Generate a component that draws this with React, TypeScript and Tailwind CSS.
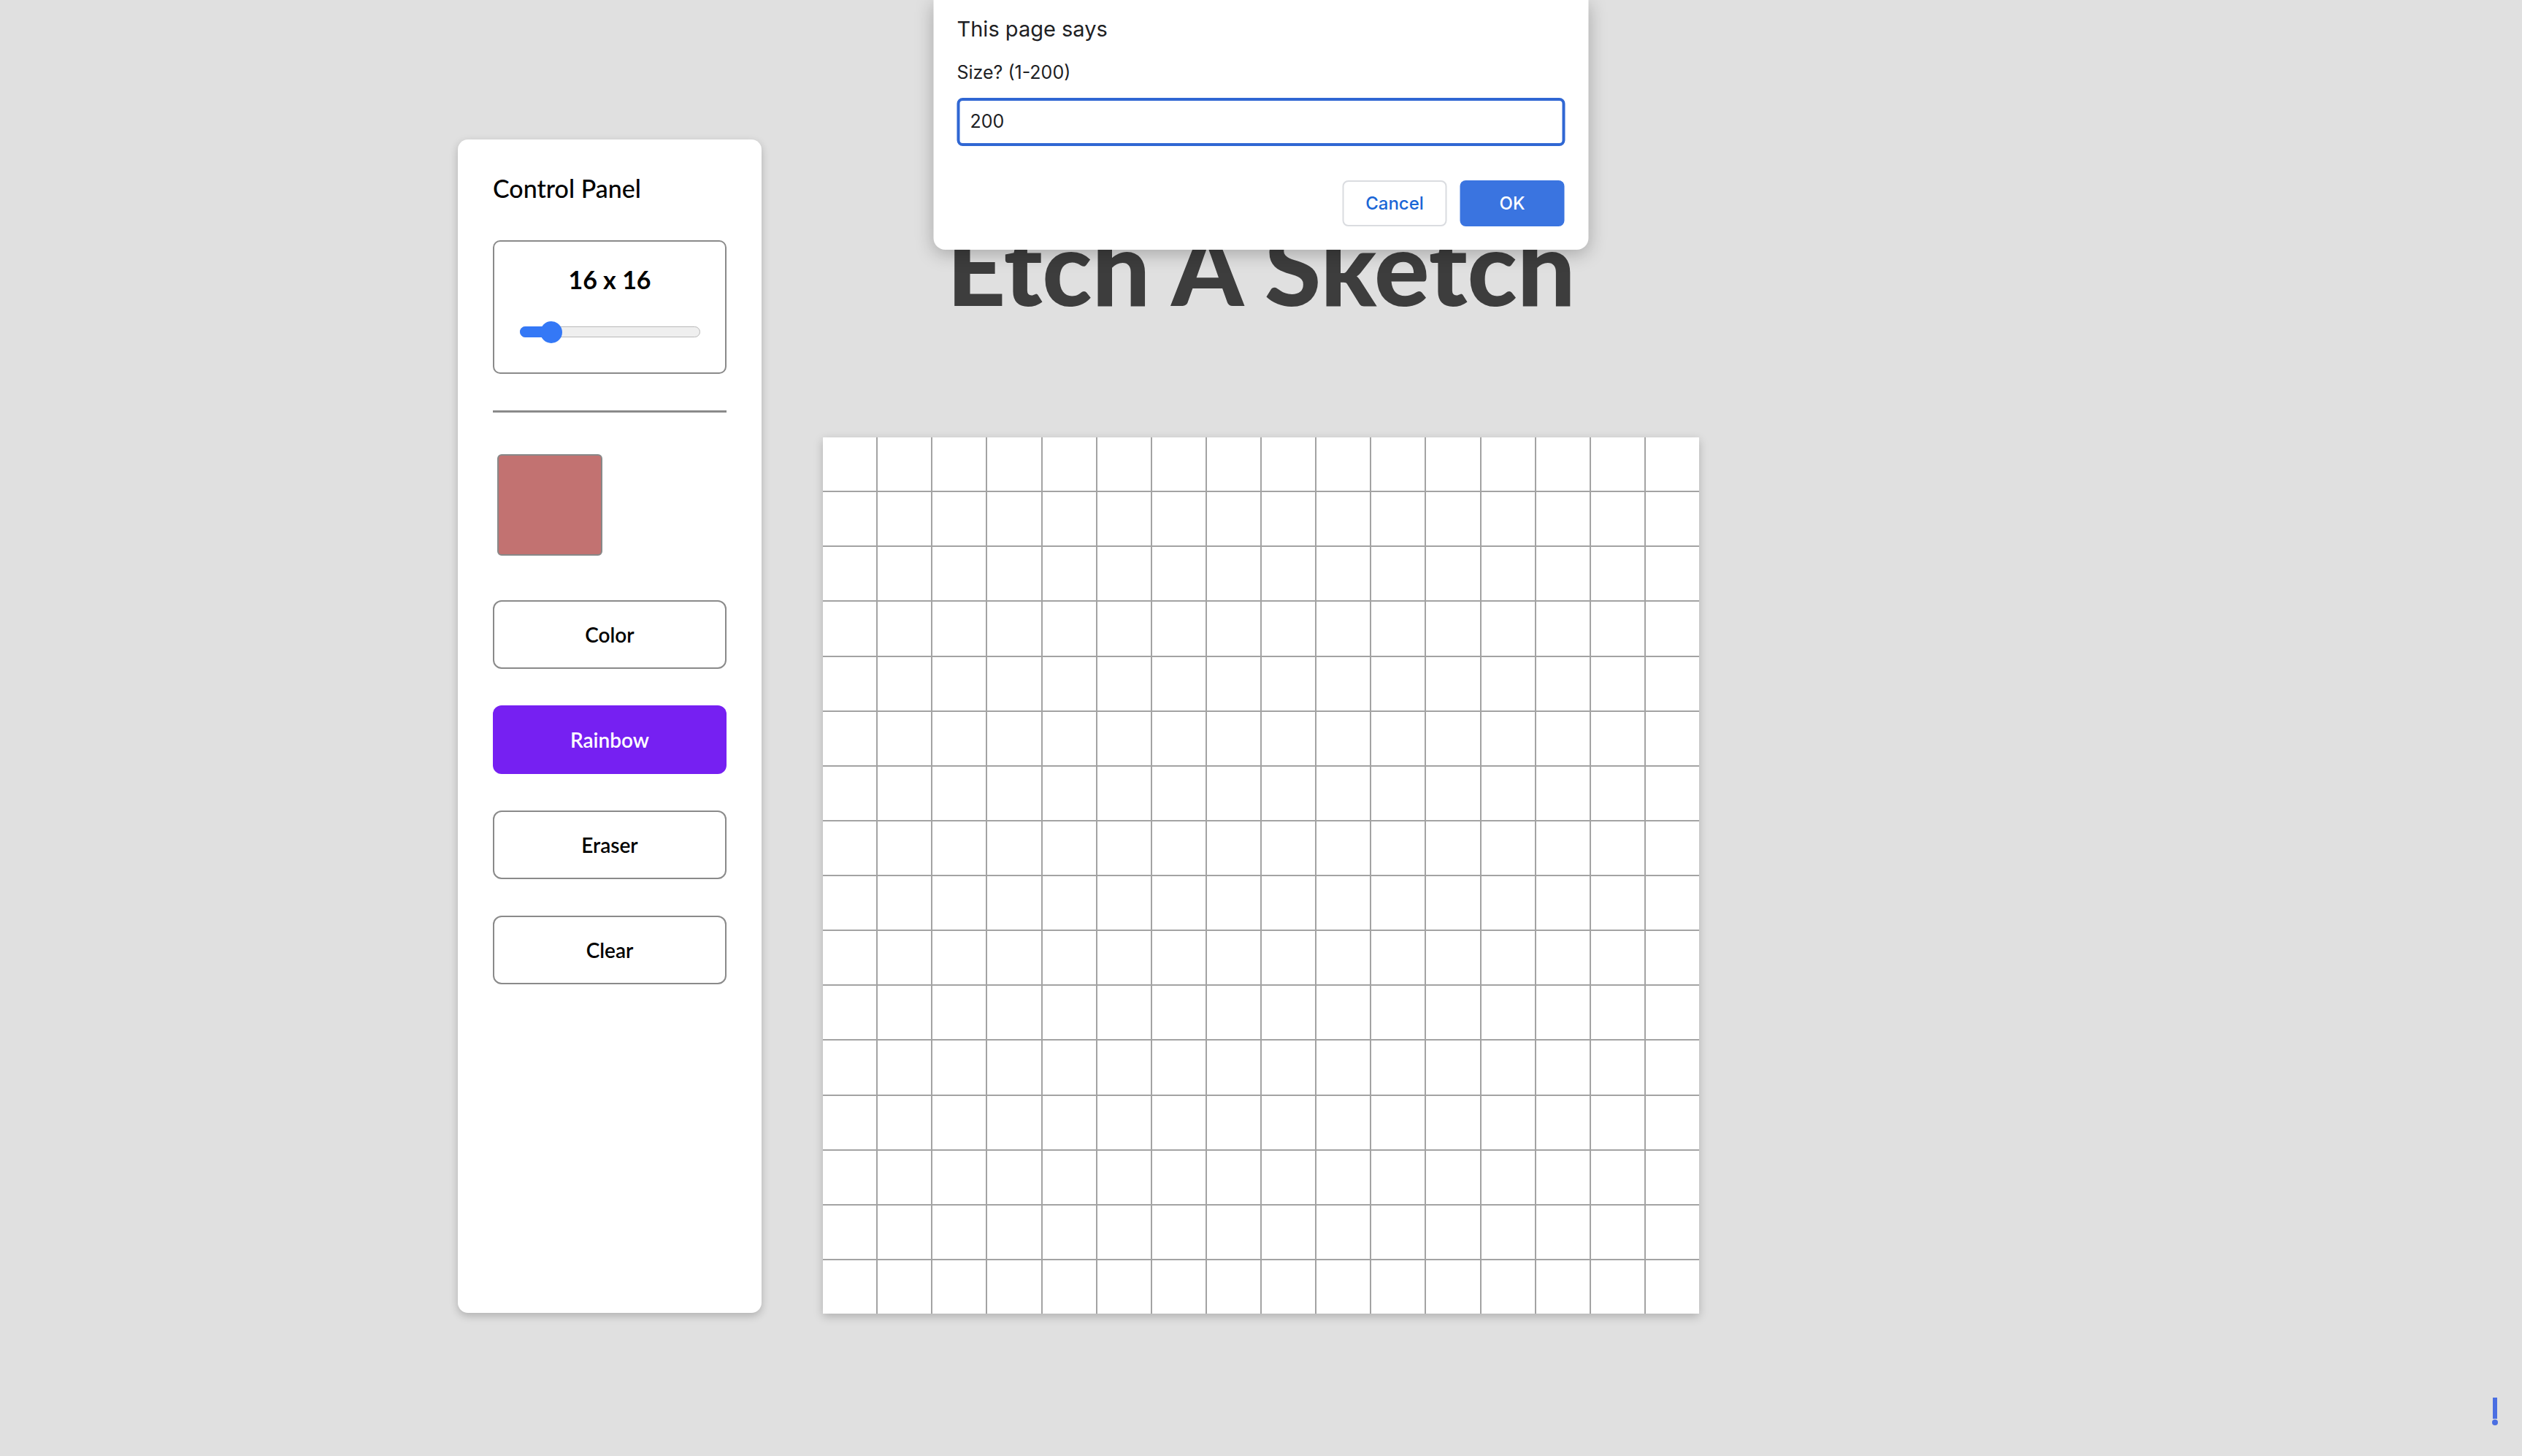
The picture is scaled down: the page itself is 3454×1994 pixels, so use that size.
import React from "react";

const cells = Array.from({ length: 256 }, (_, i) => i);

function ToolButton({ label, active }: { label: string; active?: boolean }) {
  return (
    <button
      className={`w-full h-[94px] rounded-[12px] text-[28px] font-semibold ${
        active ? "bg-[#7620f2] text-white" : "bg-white text-black border-2 border-[#8a8a8a]"
      }`}
    >
      {label}
    </button>
  );
}

export default function App() {
  return (
    <div className="relative w-full h-[1994px] bg-[#e0e0e0] overflow-hidden font-['Lato',sans-serif]">
      <div className="flex justify-center gap-[84px] pt-[191px]">
        {/* Control panel */}
        <aside className="w-[416px] h-[1607px] bg-white rounded-[14px] shadow-[0_4px_12px_rgba(0,0,0,0.22)] px-12 pt-[50px] flex flex-col">
          <h2 className="text-[34px] leading-none font-medium text-black">Control Panel</h2>

          <div className="mt-[54px] h-[183px] border-2 border-[#8a8a8a] rounded-[10px] flex flex-col items-center pt-[35px]">
            <p className="text-[34px] leading-none font-bold text-black">16 x 16</p>
            <div className="relative mt-[47px] w-[247px] h-[15px] rounded-full bg-[#efefef] border border-[#b8b8b8]">
              <div className="absolute left-[-1px] top-[-1px] h-[15px] w-[50px] rounded-full bg-[#3478f6]" />
              <div className="absolute left-[27px] top-[-8.5px] w-[30px] h-[30px] rounded-full bg-[#3478f6]" />
            </div>
          </div>

          <hr className="mt-[50px] border-0 h-[3px] bg-[#8a8a8a]" />

          <div className="mt-[57px] ml-[6px] w-[144px] h-[139px] rounded-[6px] border-2 border-[#888] bg-[#c27271]" />

          <div className="mt-[61px] flex flex-col gap-[50px]">
            <ToolButton label="Color" />
            <ToolButton label="Rainbow" active />
            <ToolButton label="Eraser" />
            <ToolButton label="Clear" />
          </div>
        </aside>

        {/* Sketch area */}
        <main className="w-[1200px] flex flex-col items-center">
          <h1 className="mt-[103px] text-[141px] leading-none font-black text-[#3d3d3d]">
            Etch A Sketch
          </h1>
          <div className="mt-[164px] w-[1200px] h-[1200px] grid grid-cols-16 grid-rows-16 gap-[2px] bg-[#a3a3a3] shadow-[0_4px_12px_rgba(0,0,0,0.22)]">
            {cells.map((c) => (
              <div key={c} className="bg-white" />
            ))}
          </div>
        </main>

        <div className="w-[416px]" />
      </div>

      {/* Browser prompt dialog */}
      <div className="absolute top-0 left-1/2 -translate-x-1/2 w-[897px] h-[342px] bg-white rounded-b-[16px] shadow-[0_6px_24px_rgba(0,0,0,0.25)] px-[32px] font-['Inter',sans-serif]">
        <p className="pt-[22px] text-[29px] leading-[36px] text-[#202124]">This page says</p>
        <p className="mt-[26px] text-[25px] leading-[30px] text-[#202124]">Size? (1-200)</p>
        <div className="mt-[20px] h-[66px] rounded-[8px] border-4 border-[#3067d3] flex items-center px-[14px] text-[25px] text-[#202124]">
          200
        </div>
        <div className="mt-[47px] flex justify-end gap-[18px] pr-[1px]">
          <button className="w-[143px] h-[63px] rounded-[8px] border-2 border-[#dadce0] bg-white text-[24px] font-medium text-[#1a66d6]">
            Cancel
          </button>
          <button className="w-[143px] h-[63px] rounded-[8px] bg-[#3a74e0] text-[24px] font-medium text-white">
            OK
          </button>
        </div>
      </div>

      {/* Extension badge */}
      <svg className="absolute left-[3410px] top-[1912px]" width="14" height="42" viewBox="0 0 14 42">
        <rect x="4" y="2" width="6" height="29" fill="#4b6fe2" />
        <circle cx="7" cy="36" r="4" fill="#4b6fe2" />
      </svg>
    </div>
  );
}
